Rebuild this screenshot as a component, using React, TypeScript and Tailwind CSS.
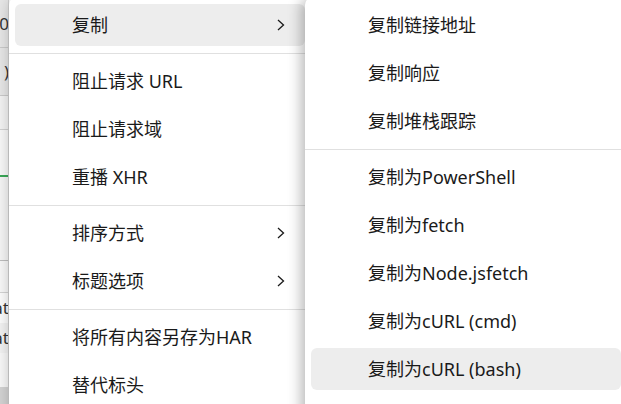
import React from "react";

type Row = { label: string; sub?: boolean; active?: boolean } | "sep";

const leftItems: Row[] = [
  { label: "复制", sub: true, active: true },
  "sep",
  { label: "阻止请求 URL" },
  { label: "阻止请求域" },
  { label: "重播 XHR" },
  "sep",
  { label: "排序方式", sub: true },
  { label: "标题选项", sub: true },
  "sep",
  { label: "将所有内容另存为HAR" },
  { label: "替代标头" },
];

const copyItems: Row[] = [
  { label: "复制链接地址" },
  { label: "复制响应" },
  { label: "复制堆栈跟踪" },
  "sep",
  { label: "复制为PowerShell" },
  { label: "复制为fetch" },
  { label: "复制为Node.jsfetch" },
  { label: "复制为cURL (cmd)" },
  { label: "复制为cURL (bash)", active: true },
];

const Chevron = () => (
  <svg width="10" height="12" viewBox="0 0 10 12" fill="none">
    <path d="M2 1 L7.5 6 L2 11" stroke="#1a1a1a" strokeWidth="1.3" />
  </svg>
);

const MenuList = ({ items }: { items: Row[] }) => (
  <>
    {items.map((item, i) =>
      item === "sep" ? (
        <div key={i} className="-mx-[6px] h-2 flex items-center">
          <div className="h-px w-full bg-[#e0e0e0]" />
        </div>
      ) : (
        <div key={i} className="h-[48px] py-[3px]">
          <div
            className={`h-full flex items-center justify-between rounded-md pl-[57px] pr-[19px] ${
              item.active ? "bg-[#ededed]" : ""
            }`}
          >
            <span className="text-[18px] leading-none text-[#1a1a1a] whitespace-nowrap">
              {item.label}
            </span>
            {item.sub && <Chevron />}
          </div>
        </div>
      )
    )}
  </>
);

const stripRows = [
  { h: 48, bg: "bg-[#e6e6e6]", text: "0", line: "border-b border-[#c9c9c9]" },
  { h: 48, bg: "bg-[#e6e6e6]", text: ")", line: "border-b border-[#c9c9c9]" },
  { h: 34, bg: "bg-[#f2f2f2]", text: "", line: "border-b border-[#d0d0d0]" },
  { h: 47, bg: "bg-[#f7f7f7]", text: "", line: "border-b-2 border-[#3aa757]" },
  { h: 84, bg: "bg-[#f4f4f4]", text: "", line: "border-b border-[#bdbdbd]" },
  { h: 32, bg: "bg-[#f7f7f7]", text: "", line: "border-b border-[#d3d3d3]" },
  { h: 30, bg: "bg-[#fbfbfb]", text: "at", line: "" },
  { h: 30, bg: "bg-[#f1f1f1]", text: "at", line: "" },
  { h: 34, bg: "bg-[#f7f7f7]", text: "", line: "" },
  { h: 20, bg: "bg-[#d2d2d2]", text: "", line: "" },
];

export default function App() {
  return (
    <div className="relative w-[621px] h-[404px] overflow-hidden bg-white font-['Noto_Sans','Noto_Sans_CJK_SC',sans-serif]">
      <div className="w-[9px] h-full flex flex-col overflow-hidden border-r border-[#cfcfcf]">
        {stripRows.map((r, i) => (
          <div
            key={i}
            style={{ height: r.h }}
            className={`shrink-0 flex items-center justify-end text-[17px] text-[#333] overflow-hidden ${r.bg} ${r.line}`}
          >
            <span className="whitespace-nowrap -mr-[1px]">{r.text}</span>
          </div>
        ))}
      </div>

      <div className="absolute left-[9px] top-[-3px] w-[302px] h-[430px] bg-white rounded-lg px-[6px] pt-[4px] shadow-[0_2px_14px_rgba(0,0,0,0.22)]">
        <MenuList items={leftItems} />
      </div>

      <div className="absolute left-[305px] top-[-3px] w-[322px] h-[430px] bg-white rounded-lg px-[6px] pt-[4px] shadow-[-4px_2px_14px_rgba(0,0,0,0.28)]">
        <MenuList items={copyItems} />
      </div>
    </div>
  );
}
